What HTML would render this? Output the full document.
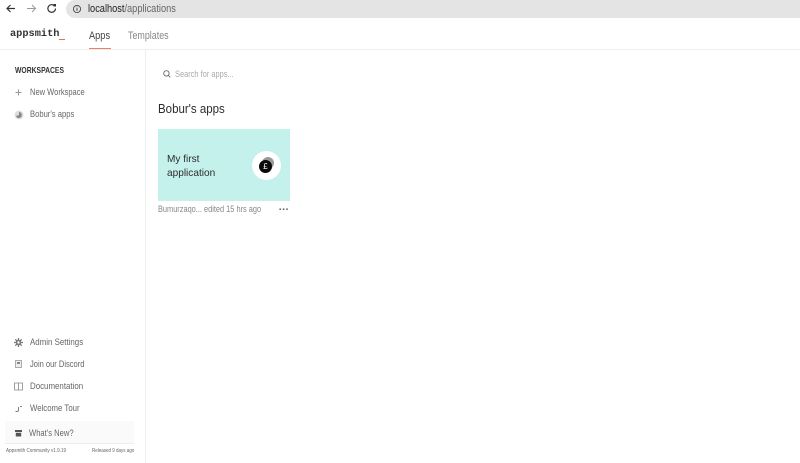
<!DOCTYPE html>
<html>
<head>
<meta charset="utf-8">
<style>
html,body{margin:0;padding:0;width:800px;height:463px;overflow:hidden;background:#fff;font-family:"Liberation Sans",sans-serif;color:#4b4848}
.a{position:absolute;white-space:nowrap;line-height:1;transform-origin:left top}
svg{position:absolute;overflow:visible}
</style>
</head>
<body>
<div class="a" style="left:66px;top:0;width:734px;height:18px;background:#e4e4e4;border-radius:9px 0 0 9px"></div>
<svg style="left:0;top:0" width="70" height="18" fill="none">
<path d="M15 8.5H7M10.5 5L7 8.5L10.5 12" stroke="#333" stroke-width="1.2"/>
<path d="M27 8.5H35M32 5L35.5 8.5L32 12" stroke="#999" stroke-width="1"/>
<path d="M55.5 8.5A3.8 3.8 0 1 1 54.3 5.7" stroke="#333" stroke-width="1.2"/>
<path d="M53.5 4H56V6.5H53.5Z" fill="#333"/>
<circle cx="77" cy="9" r="3.6" stroke="#444" stroke-width=".9"/>
<path d="M77 8V11M77 6.6V7.4" stroke="#444" stroke-width=".9"/>
</svg>
<div class="a" style="left:88px;top:4px;font-size:11px;color:#222;transform:scaleX(.84)">localhost<span style="color:#666">/applications</span></div>

<div class="a" style="left:10px;top:30px;font-family:'Liberation Mono',monospace;font-size:10px;font-weight:bold;color:#333;transform:scaleX(1.03)">appsmith</div>
<div class="a" style="left:59px;top:39px;width:6px;height:1px;background:#e8704a"></div>
<div class="a" style="left:89px;top:31px;font-size:11px;color:#444;transform:scaleX(.84)">Apps</div>
<div class="a" style="left:89px;top:48px;width:22px;height:1px;background:#e8835f"></div>
<div class="a" style="left:128px;top:31px;font-size:11px;color:#888;transform:scaleX(.81)">Templates</div>
<div class="a" style="left:0;top:49px;width:800px;height:1px;background:#eee"></div>
<div class="a" style="left:145px;top:50px;width:1px;height:413px;background:#eee"></div>

<div class="a" style="left:15px;top:66px;font-size:8.3px;font-weight:bold;color:#333;transform:scaleX(.82)">WORKSPACES</div>
<svg style="left:15px;top:89px" width="8" height="8"><path d="M3.5 .5V6.5M.5 3.5H6.5" stroke="#999" stroke-width="1"/></svg>
<div class="a" style="left:30px;top:88px;font-size:9.3px;color:#666;transform:scaleX(.81)">New Workspace</div>
<svg style="left:14px;top:110px" width="10" height="10"><circle cx="5" cy="5" r="4.5" fill="#ddd"/><path d="M5 5L5 2A3 3 0 1 1 2 6Z" fill="#888"/></svg>
<div class="a" style="left:30px;top:110px;font-size:9.3px;color:#666;transform:scaleX(.82)">Bobur's apps</div>

<svg style="left:163px;top:70px" width="8" height="8" fill="none"><circle cx="3.4" cy="3.4" r="2.7" stroke="#666" stroke-width=".9"/><path d="M5.4 5.4L7.3 7.3" stroke="#666" stroke-width=".9"/></svg>
<div class="a" style="left:175px;top:70px;font-size:9.3px;color:#aaa;transform:scaleX(.8)">Search for apps...</div>
<div class="a" style="left:158px;top:103px;font-size:12.5px;color:#2c2c2c;transform:scaleX(.92)">Bobur's apps</div>

<div class="a" style="left:158px;top:129px;width:132px;height:72px;background:#c5f1ec"></div>
<div class="a" style="left:167px;top:152px;font-size:10.5px;line-height:14px;color:#2c2c2c;transform:scaleX(.96)">My first<br>application</div>
<div class="a" style="left:252px;top:151px;width:29px;height:29px;border-radius:50%;background:#fff"></div>
<div class="a" style="left:262px;top:157px;width:12px;height:12px;border-radius:50%;background:#999"></div>
<div class="a" style="left:259px;top:160px;width:13px;height:13px;border-radius:50%;background:#0a0a0a;color:#fff;font-size:8px;line-height:13px;text-align:center">£</div>
<div class="a" style="left:158px;top:205px;font-size:8.8px;color:#888;transform:scaleX(.84)">Bumurzaqo... edited 15 hrs ago</div>
<svg style="left:279px;top:208px" width="10" height="3"><circle cx="1.2" cy="1.2" r=".9" fill="#666"/><circle cx="4.6" cy="1.2" r=".9" fill="#666"/><circle cx="8" cy="1.2" r=".9" fill="#666"/></svg>

<svg style="left:14px;top:338px" width="10" height="10"><path d="M4.5 0V9M0 4.5H9M1.3 1.3L7.7 7.7M7.7 1.3L1.3 7.7" stroke="#777" stroke-width="1.3"/><circle cx="4.5" cy="4.5" r="2.7" fill="#777"/><circle cx="4.5" cy="4.5" r="1.2" fill="#fff"/></svg>
<div class="a" style="left:30px;top:338px;font-size:9.3px;color:#666;transform:scaleX(.85)">Admin Settings</div>
<svg style="left:15px;top:360px" width="8" height="9"><rect x=".5" y=".5" width="6" height="7" fill="#eee" stroke="#999" stroke-width=".8"/><rect x="2" y="2" width="3" height="2" fill="#888"/></svg>
<div class="a" style="left:30px;top:360px;font-size:9.3px;color:#666;transform:scaleX(.81)">Join our Discord</div>
<svg style="left:14px;top:382px" width="10" height="9" fill="none"><path d="M.5 1H4.5V8H.5ZM4.5 1H8.5V8H4.5Z" stroke="#888" stroke-width=".8"/></svg>
<div class="a" style="left:30px;top:382px;font-size:9.3px;color:#666;transform:scaleX(.85)">Documentation</div>
<svg style="left:15px;top:405px" width="8" height="8" fill="none"><path d="M.5 6.5H2Q3.5 6.5 3.5 5V2" stroke="#777" stroke-width=".9"/><path d="M5 1.5H7" stroke="#777" stroke-width=".9"/></svg>
<div class="a" style="left:30px;top:404px;font-size:9.3px;color:#666;transform:scaleX(.84)">Welcome Tour</div>
<div class="a" style="left:5px;top:421px;width:129px;height:22px;background:#fafafa;border-bottom:1px solid #eee"></div>
<svg style="left:15px;top:429px" width="8" height="8"><path d="M0 1H7V3H0ZM.8 3.7H6.2V7.5H.8Z" fill="#555"/></svg>
<div class="a" style="left:29px;top:429px;font-size:9.3px;color:#666;transform:scaleX(.82)">What's New?</div>
<div class="a" style="left:6px;top:449px;font-size:5px;color:#666;transform:scaleX(.92)">Appsmith Community v1.9.19</div>
<div class="a" style="left:92px;top:449px;font-size:5px;color:#666;transform:scaleX(.9)">Released 9 days ago</div>
</body>
</html>
